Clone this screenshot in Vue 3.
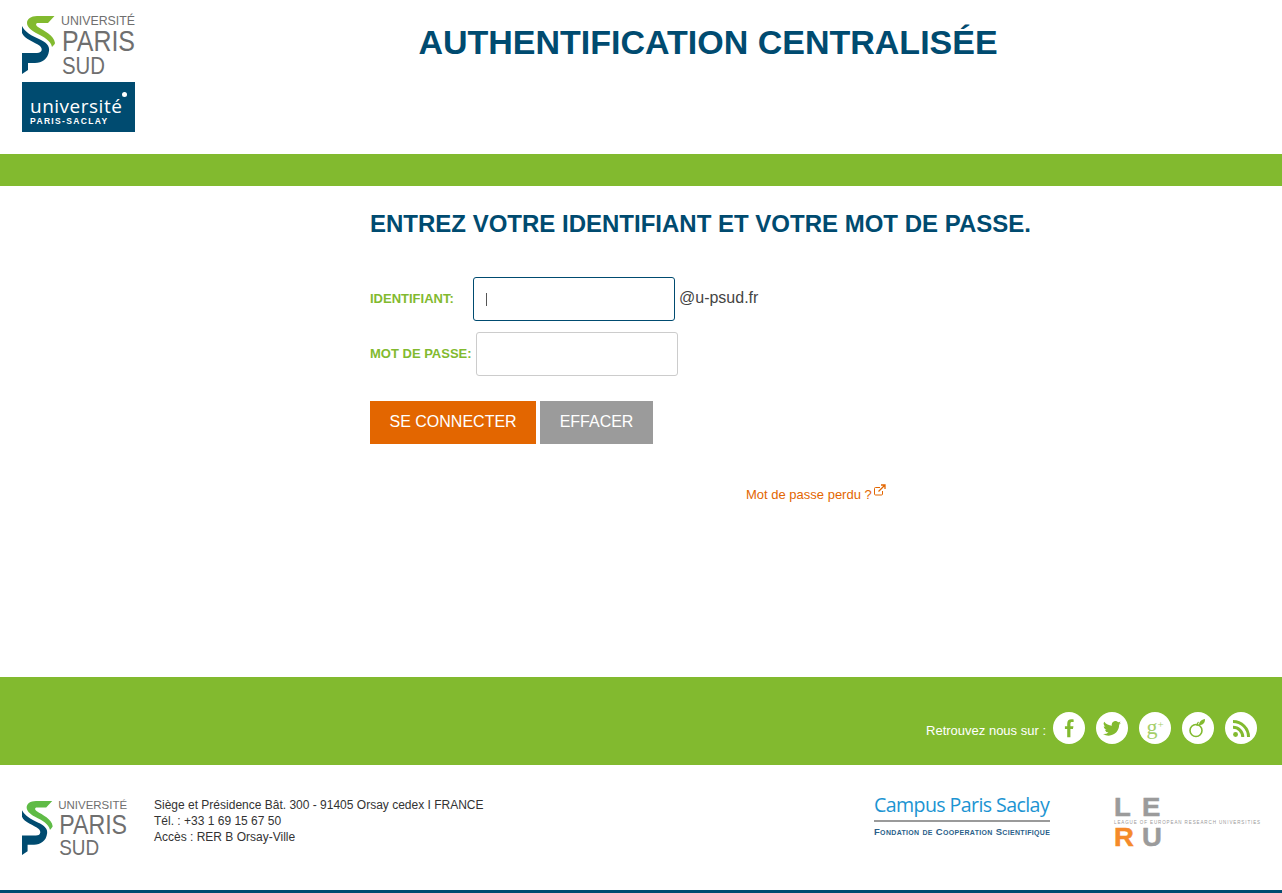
<script setup>
const address = ['Siège et Présidence Bât. 300 - 91405 Orsay cedex I FRANCE', 'Tél. : +33 1 69 15 67 50', 'Accès : RER B Orsay-Ville']
const greenS = 'M32.500 1L26 8H16C14 8 13 10 16 12C22 16 32 20 33 28C33 29 31 31 30 32C29 26 22 22 14 18C8 15 5 11 5 8C5 4 9 1 15 1Z'
const blueS = 'M0 11C3 17 10 21 17 24C24 27 28 31 27 36C26 44 20 48 13 48H6V55L0 59V38H15C20 38 21 34 18 31C13 27 2 24 0 18Z'
</script>

<template>
  <div class="page">
    <header class="head">
      <div class="logos">
        <svg class="psud" width="114" height="60" viewBox="0 0 114 60">
          <path fill="#82ba2f" :d="greenS" />
          <path fill="#004b70" :d="blueS" />
          <text x="39" y="10" class="t1" textLength="74" lengthAdjust="spacingAndGlyphs">UNIVERSITÉ</text>
          <text x="40" y="36" class="t2" textLength="73" lengthAdjust="spacingAndGlyphs">PARIS</text>
          <text x="40" y="59" class="t3" textLength="43" lengthAdjust="spacingAndGlyphs">SUD</text>
        </svg>
        <div class="saclay">
          <span class="s1">université</span>
          <span class="s2">PARIS-SACLAY</span>
          <i class="dot"></i>
        </div>
      </div>
      <h1>AUTHENTIFICATION CENTRALISÉE</h1>
    </header>
    <div class="band"></div>
    <main class="main">
      <h2>ENTREZ VOTRE IDENTIFIANT ET VOTRE MOT DE PASSE.</h2>
      <div class="row r1">
        <label class="lab w1">IDENTIFIANT:</label>
        <div class="input focus"><i class="caret"></i></div>
        <span class="suffix">@u-psud.fr</span>
      </div>
      <div class="row r2">
        <label class="lab">MOT DE PASSE:</label>
        <div class="input"></div>
      </div>
      <div class="btns">
        <button class="btn orange">SE CONNECTER</button>
        <button class="btn grey">EFFACER</button>
      </div>
      <a class="lost">Mot de passe perdu ?<svg width="12" height="12" viewBox="0 0 12 12" fill="none" stroke="#e36600"><path d="M8.500 7v3a1 1 0 0 1-1 1h-6a1 1 0 0 1-1-1V4.500a1 1 0 0 1 1-1H6" /><path d="M4.500 7.500L10.500 1.500M7 1h4v4" stroke-width="1.300" /></svg></a>
    </main>
    <section class="social">
      <span class="follow">Retrouvez nous sur :</span>
      <a class="ic">
        <svg width="11" height="20" viewBox="0 0 12 20"><path fill="#82ba2f" d="M3.500 20V11H1V8H3.500V5.500C3.500 2 5.200 .5 8 .5C9.200 .5 10 .6 10.500 .7V3.500H8.800C7.400 3.500 7 4.200 7 5.400V8H10.300L9.800 11H7V20Z" /></svg>
      </a>
      <a class="ic">
        <svg width="18" height="15" viewBox="0 0 24 20"><path fill="#82ba2f" d="M24 2.400a10 10 0 0 1-2.800.8A5 5 0 0 0 23.300.5a10 10 0 0 1-3.100 1.200A4.900 4.900 0 0 0 11.800 6.200 14 14 0 0 1 1.700.9a4.900 4.900 0 0 0 1.500 6.600 5 5 0 0 1-2.200-.6c0 2.400 1.700 4.400 3.900 4.900a5 5 0 0 1-2.200.1 4.900 4.900 0 0 0 4.600 3.400A9.900 9.900 0 0 1 0 17.300 14 14 0 0 0 7.500 19.500c9.100 0 14.300-7.700 14-14.600A10 10 0 0 0 24 2.400z" /></svg>
      </a>
      <a class="ic"><span class="gp">g<sup>+</sup></span></a>
      <a class="ic">
        <svg width="22" height="22" viewBox="0 0 22 22" fill="none"><circle cx="9" cy="13.500" r="6" stroke="#82ba2f" stroke-width="1.600" /><path stroke="#82ba2f" stroke-width="1.200" d="M10 9C10 7 10.500 6 11.500 5" /><path fill="#82ba2f" d="M12 8C12 4.500 14.500 2.500 18 2C18 6 16 8 12 8Z" /></svg>
      </a>
      <a class="ic">
        <svg width="17" height="17" viewBox="0 0 16 16" fill="none" stroke="#82ba2f" stroke-width="2.800"><circle cx="2.400" cy="13.600" r="2.300" fill="#82ba2f" stroke="none" /><path d="M0 6.800a9.200 9.200 0 0 1 9.200 9.200" /><path d="M0 1.400a14.600 14.600 0 0 1 14.600 14.600" /></svg>
      </a>
    </section>
    <footer class="foot">
      <svg class="psud2" width="106" height="56" viewBox="0 0 114 60">
        <path fill="#5fbb46" :d="greenS" />
        <path fill="#004b70" :d="blueS" />
        <text x="39" y="10" class="t1" textLength="74" lengthAdjust="spacingAndGlyphs">UNIVERSITÉ</text>
        <text x="40" y="36" class="t2" textLength="73" lengthAdjust="spacingAndGlyphs">PARIS</text>
        <text x="40" y="59" class="t3" textLength="43" lengthAdjust="spacingAndGlyphs">SUD</text>
      </svg>
      <address class="addr">
        <span v-for="l in address" :key="l">{{ l }}</span>
      </address>
      <div class="campus">
        <span class="c1">Campus Paris Saclay</span>
        <span class="c2">Fondation de Cooperation Scientifique</span>
      </div>
      <div class="leru">
        <div class="lr"><b>L</b><b>E</b></div>
        <span class="lt">LEAGUE OF EUROPEAN RESEARCH UNIVERSITIES</span>
        <div class="lr"><b class="or">R</b><b>U</b></div>
      </div>
    </footer>
  </div>
</template>

<style>
body { margin: 0; background: #fff; }
</style>

<style scoped>
.page { width: 1282px; height: 893px; display: flex; flex-direction: column; font-family: "Liberation Sans", Arial, sans-serif; color: #333; overflow: hidden; }
.head { height: 154px; display: flex; padding-left: 22px; box-sizing: border-box; }
.logos { width: 113px; padding-top: 15px; display: flex; flex-direction: column; gap: 7px; }
.psud { display: block; overflow: visible; }
.t1 { font: 400 12.400px "Liberation Sans", sans-serif; fill: #6f6f6f; }
.t2 { font: 400 29px "Liberation Sans", sans-serif; fill: #6f6f6f; }
.t3 { font: 400 24px "Liberation Sans", sans-serif; fill: #6f6f6f; }
.saclay { position: relative; height: 50px; background: #004b70; color: #fff; display: flex; flex-direction: column; padding: 15px 0 0 8px; box-sizing: border-box; }
.s1 { font: 400 19px/19px "Open Sans", sans-serif; letter-spacing: .5px; }
.s2 { font: 700 8.500px/10px "Liberation Sans", sans-serif; letter-spacing: 1.350px; }
.dot { position: absolute; top: 10px; left: 100px; width: 5px; height: 5px; border-radius: 50%; background: #fff; }
h1 { margin: 21px 0 0; width: 1146px; text-align: center; font-size: 34px; line-height: 42px; font-weight: 700; color: #004b70; }
.band { height: 32px; background: #82ba2f; }
.main { flex: 1; box-sizing: border-box; padding: 24px 0 0 370px; display: flex; flex-direction: column; align-items: flex-start; }
h2 { margin: 0 0 39px; font-size: 24px; line-height: 28px; font-weight: 700; color: #004b70; white-space: nowrap; }
.row { display: flex; align-items: center; }
.r1 { height: 44px; margin-bottom: 11px; }
.r2 { height: 44px; }
.lab { font-size: 13px; font-weight: 700; color: #82ba2f; margin: -2px 4px 0 0; white-space: nowrap; }
.w1 { width: 98px; margin-right: 5px; }
.input { width: 202px; height: 44px; box-sizing: border-box; border: 1px solid #ccc; border-radius: 3px; background: #fff; display: flex; align-items: center; padding-left: 12px; }
.focus { border-color: #004b70; }
.caret { width: 1px; height: 13px; background: #555; }
.suffix { margin: -3px 0 0 4px; font-size: 16px; color: #444; }
.btns { margin-top: 25px; display: flex; gap: 4px; }
.btn { height: 43px; border: 0; padding: 0 19.500px 2px; font: 400 16px "Liberation Sans", sans-serif; color: #fff; }
.orange { background: #e36600; }
.grey { background: #9b9b9b; }
.lost { margin: 43px 0 0 376px; font-size: 13px; line-height: 16px; color: #e36600; display: flex; align-items: flex-start; gap: 2px; }
.lost svg { margin-top: -3px; }
.social { height: 88px; background: #82ba2f; display: flex; align-items: center; justify-content: flex-end; padding: 14px 25px 0 0; box-sizing: border-box; gap: 11px; }
.follow { font-size: 13px; color: #fff; margin-right: -4px; margin-top: 5px; }
.ic { width: 32px; height: 32px; border-radius: 50%; background: #fff; display: flex; align-items: center; justify-content: center; color: #82ba2f; }
.gp { font: 400 22px/1 "Liberation Serif", serif; margin-top: -2px; color: #a5cf6a; }
.gp sup { font-size: 11px; vertical-align: 6px; line-height: 0; }
.foot { height: 128px; box-sizing: border-box; border-bottom: 3px solid #004b70; padding-left: 22px; display: flex; align-items: flex-start; position: relative; }
.psud2 { margin-top: 35px; flex: none; overflow: visible; }
.addr { margin: 32px 0 0 26px; font-style: normal; font-size: 12px; line-height: 16px; display: flex; flex-direction: column; color: #333; width: 720px; }
.campus { width: 176px; margin: 27px 0 0 0; display: flex; flex-direction: column; }
.c1 { font: 400 19.600px/25px "Open Sans", sans-serif; color: #1c94d2; letter-spacing: -.6px; white-space: nowrap; border-bottom: 2px solid #9a9a9a; padding-bottom: 3px; }
.c2 { font: 700 9.500px/10px "Liberation Sans", sans-serif; font-variant: small-caps; color: #2b5f8a; margin-top: 5px; white-space: nowrap; letter-spacing: .32px; }
.leru { margin: 32px 0 0 64px; width: 146px; }
.lr { display: flex; height: 20px; }
.lr b { width: 28px; font: 700 25px/20px "Liberation Sans", sans-serif; color: #9b9b9b; transform: scaleX(1.100); transform-origin: left; -webkit-text-stroke: .5px currentColor; }
.lr .or { color: #f58a2a; }
.lt { display: block; font: 400 4.500px/10px "Liberation Sans", sans-serif; letter-spacing: .9px; color: #999; white-space: nowrap; position: relative; top: 1px; }
</style>
